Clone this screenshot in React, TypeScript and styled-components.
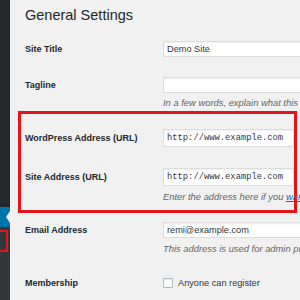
import React from "react";
import styled, { createGlobalStyle } from "styled-components";

const GlobalStyle = createGlobalStyle`
  html, body {
    margin: 0;
    padding: 0;
    background: #f1f1f1;
    overflow: hidden;
  }
  body {
    font-family: "Liberation Sans", Arial, sans-serif;
  }
`;

const Page = styled.div`
  display: flex;
  min-height: 100vh;
  width: 300px;
  overflow: hidden;
`;

const Sidebar = styled.nav`
  flex: none;
  width: 10px;
  display: flex;
  flex-direction: column;
  background: #23282d;
`;

const MenuTop = styled.div`
  flex: 0 0 207px;
  background: #23282d;
`;

const ActiveItem = styled.div`
  position: relative;
  flex: 0 0 20px;
  background: #0073aa;
`;

const Arrow = styled.span`
  position: absolute;
  right: 0;
  top: 4px;
  width: 0;
  height: 0;
  border-top: 6px solid transparent;
  border-bottom: 6px solid transparent;
  border-right: 4px solid #f1f1f1;
`;

const Submenu = styled.div`
  flex: 1;
  background: #32373c;
  padding-top: 3px;
`;

const HighlightedItem = styled.div`
  width: 8px;
  height: 22px;
  box-sizing: border-box;
  border: 2px solid #e3141c;
  border-left: none;
`;

const Main = styled.main`
  flex: 1;
  min-width: 0;
  padding: 5px 0 0 15px;
  overflow: hidden;
`;

const Heading = styled.h1`
  margin: 0;
  font-size: 14.5px;
  line-height: 20px;
  font-weight: 400;
  color: #23282d;
  white-space: nowrap;
`;

const Row = styled.div<{ $mt: number; $h: number }>`
  display: flex;
  align-items: flex-start;
  margin-top: ${(p) => p.$mt}px;
  --row-h: ${(p) => p.$h}px;
`;

const Label = styled.div`
  flex: none;
  width: 138px;
  height: var(--row-h);
  line-height: var(--row-h);
  font-size: 9px;
  font-weight: 700;
  color: #23282d;
  white-space: nowrap;
`;

const Field = styled.div`
  flex: 1;
  min-width: 0;
  display: flex;
  flex-direction: column;
`;

const Input = styled.input<{ $mono?: boolean; $wide?: boolean }>`
  box-sizing: border-box;
  height: var(--row-h);
  width: ${(p) => (p.$wide ? "170px" : "100%")};
  flex: none;
  margin: 0;
  padding: 0 3px;
  background: #fff;
  border: 1px solid #ddd;
  border-radius: 0;
  box-shadow: inset 0 1px 2px rgba(0, 0, 0, 0.07);
  color: #32373c;
  outline: none;
  font-family: ${(p) =>
    p.$mono ? '"Liberation Mono", "Courier New", monospace' : '"Liberation Sans", Arial, sans-serif'};
  font-size: ${(p) => (p.$mono ? "8.8px" : "9.2px")};
`;

const Description = styled.p<{ $mt: number }>`
  margin: ${(p) => p.$mt}px 0 0;
  font-size: 9.4px;
  line-height: 11px;
  font-style: italic;
  color: #666;
  white-space: nowrap;
`;

const Link = styled.a`
  color: #0073aa;
  text-decoration: underline;
`;

const Highlight = styled.section`
  box-sizing: border-box;
  width: 279px;
  margin: 3px 0 0 -7px;
  padding: 0 0 8px 4px;
  border: 3px solid #e3141c;
`;

const CheckRow = styled.label`
  display: flex;
  align-items: center;
  gap: 5px;
  height: var(--row-h);
  font-size: 9.2px;
  color: #32373c;
  white-space: nowrap;
`;

const Checkbox = styled.span`
  box-sizing: border-box;
  width: 10px;
  height: 10px;
  flex: none;
  background: #fff;
  border: 1px solid #b4b9be;
  border-radius: 1px;
  box-shadow: inset 0 1px 2px rgba(0, 0, 0, 0.1);
`;

export default function App() {
  return (
    <>
      <GlobalStyle />
      <Page>
        <Sidebar>
          <MenuTop />
          <ActiveItem>
            <Arrow />
          </ActiveItem>
          <Submenu>
            <HighlightedItem />
          </Submenu>
        </Sidebar>
        <Main>
          <Heading>General Settings</Heading>

          <Row $mt={16} $h={16}>
            <Label>Site Title</Label>
            <Field>
              <Input $wide readOnly value="Demo Site" />
            </Field>
          </Row>

          <Row $mt={20} $h={16}>
            <Label>Tagline</Label>
            <Field>
              <Input $wide readOnly value="" />
              <Description $mt={4}>In a few words, explain what this site is about.</Description>
            </Field>
          </Row>

          <Highlight>
            <Row $mt={15} $h={18}>
              <Label>WordPress Address (URL)</Label>
              <Field>
                <Input $mono readOnly value="http://www.example.com" />
              </Field>
            </Row>
            <Row $mt={21} $h={18}>
              <Label>Site Address (URL)</Label>
              <Field>
                <Input $mono readOnly value="http://www.example.com" />
                <Description $mt={5}>
                  Enter the address here if you <Link href="#">want your site home page to be different</Link>
                </Description>
              </Field>
            </Row>
          </Highlight>

          <Row $mt={9} $h={16}>
            <Label>Email Address</Label>
            <Field>
              <Input $wide readOnly value="remi@example.com" />
              <Description $mt={5}>This address is used for admin purposes.</Description>
            </Field>
          </Row>

          <Row $mt={24} $h={10}>
            <Label>Membership</Label>
            <Field>
              <CheckRow>
                <Checkbox />
                Anyone can register
              </CheckRow>
            </Field>
          </Row>
        </Main>
      </Page>
    </>
  );
}
